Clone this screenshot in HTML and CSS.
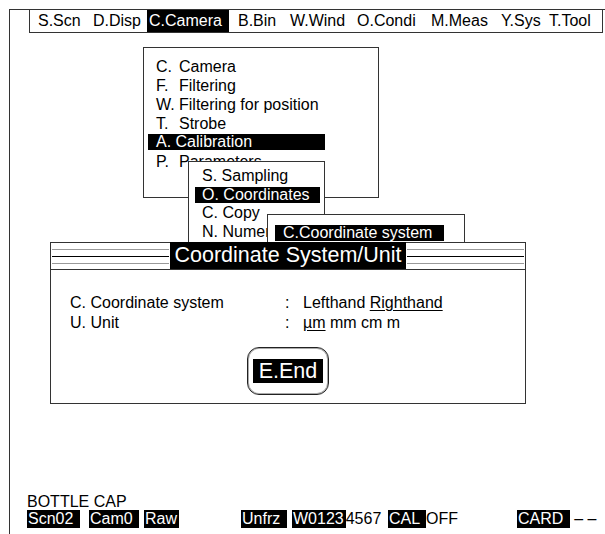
FILE: index.html
```html
<!DOCTYPE html>
<html lang="en">
<head>
    <meta charset="UTF-8">
    <title>Coordinate System/Unit</title>
    <link rel="stylesheet" href="styles.css">
</head>
<body>

    <div class="screen">
        <div class="frame">
            <nav class="menubar">
                <span>S.Scn</span>
                <span>D.Disp</span>
                <span class="on">C.Camera</span>
                <span>B.Bin</span>
                <span>W.Wind</span>
                <span>O.Condi</span>
                <span>M.Meas</span>
                <span>Y.Sys</span>
                <span>T.Tool</span>
            </nav>

            <div class="status">
                <div class="status-name">BOTTLE CAP</div>
                <div class="fields">
                    <div><span class="inv">Scn02 </span></div>
                    <div><span class="inv">Cam0 </span></div>
                    <div><span class="inv">Raw</span></div>
                    <div><span class="inv">Unfrz </span></div>
                    <div><span class="inv">W0123</span>4567</div>
                    <div><span class="inv">CAL </span>OFF</div>
                    <div><span class="inv">CARD </span> &ndash; &ndash;</div>
                </div>
            </div>
        </div>

        <!-- pull-down menus, stacked like windows -->
        <div class="menu menu-main">
            <div class="item"><span class="key">C.</span>Camera</div>
            <div class="item"><span class="key">F.</span>Filtering</div>
            <div class="item"><span class="key">W.</span>Filtering for position</div>
            <div class="item"><span class="key">T.</span>Strobe</div>
            <div class="item on">A. Calibration</div>
            <div class="item"><span class="key">P.</span>Parameters</div>
        </div>

        <div class="menu menu-sub">
            <div class="item">S. Sampling</div>
            <div class="item on">O. Coordinates</div>
            <div class="item">C. Copy</div>
            <div class="item cut">N. Numer</div>
        </div>

        <div class="menu menu-coord">
            <div class="item on">C.Coordinate system</div>
        </div>

        <div class="dialog">
            <div class="dialog-head">
                <div class="rule"></div>
                <div class="dialog-title">Coordinate System/Unit</div>
                <div class="rule"></div>
            </div>
            <div class="dialog-body">
                <div>C. Coordinate system</div>
                <div>:</div>
                <div>Lefthand <u>Righthand</u></div>
                <div>U. Unit</div>
                <div>:</div>
                <div><u>&micro;m</u> mm cm m</div>
            </div>
            <div class="end-wrap">
                <div class="end"><span>E.End</span></div>
            </div>
        </div>
    </div>

</body>
</html>
```

FILE: styles.css
```css
:root {
    --line: #333;
    --line-light: #999;
    --ink: #000;
    --paper: #fff;
}

*, *::before, *::after {
    box-sizing: border-box;
    margin: 0;
    padding: 0;
}

body {
    font-family: "Liberation Sans", Arial, sans-serif;
    font-size: 16px;
    color: var(--ink);
    background: var(--paper);
}

.screen {
    position: relative;
    width: 605px;
    height: 534px;
    overflow: hidden;
}

.frame {
    margin: 9px 0 0 9px;
    height: 525px;
    border-top: 1px solid var(--line);
    border-left: 1px solid var(--line);
    display: flex;
    flex-direction: column;
}

/* top menu bar */
.menubar {
    margin: -1px 0 0 19px;
    width: 574px;
    height: 24px;
    border: 1px solid var(--line);
    padding-left: 6px;
    display: grid;
    grid-template-columns: 55px 56px 89px 52px 67px 74px 70px 48px 1fr;
    line-height: 22px;
}

.menubar span {
    padding-left: 2px;
    white-space: nowrap;
}

.menubar .on {
    justify-self: start;
    width: 82px;
    background: var(--ink);
    color: var(--paper);
}

/* status lines at the bottom */
.status {
    margin-top: auto;
    padding: 0 0 6px 17px;
}

.status-name {
    line-height: 16px;
}

.fields {
    display: grid;
    grid-template-columns: 62px 55px 97px 51px 96px 129px 1fr;
    line-height: 18px;
    white-space: pre;
}

.fields .inv {
    display: inline-block;
    background: var(--ink);
    color: var(--paper);
    padding: 0 2px 0 1px;
}

/* menus */
.menu {
    position: absolute;
    background: var(--paper);
    border: 1px solid var(--line);
    overflow: hidden;
    white-space: nowrap;
}

.menu .item {
    height: 19px;
    line-height: 19px;
}

.menu .item.on {
    height: 16px;
    line-height: 16px;
    margin: 1px 0 2px;
    background: var(--ink);
    color: var(--paper);
}

.menu-main {
    left: 143px;
    top: 47px;
    width: 236px;
    height: 151px;
    padding: 9px 0 0 4px;
}

.menu-main .item {
    padding-left: 8px;
}

.menu-main .item.on {
    width: 177px;
}

.menu-main .key {
    display: inline-block;
    width: 23px;
}

.menu-sub {
    left: 188px;
    top: 161px;
    width: 137px;
    height: 100px;
    padding: 5px 0 0 6px;
}

.menu-sub .item {
    height: 18.5px;
    line-height: 18.5px;
    padding-left: 7px;
}

.menu-sub .item.on {
    width: 125px;
    margin: 1px 0 1.5px;
}

/* the last entry runs in under the next menu */
.menu-sub .item.cut {
    width: 72px;
    overflow: hidden;
}

.menu-coord {
    left: 267px;
    top: 214px;
    width: 198px;
    height: 60px;
    padding: 9px 0 0 7px;
}

.menu-coord .item.on {
    width: 169px;
    padding-left: 8px;
}

/* dialog */
.dialog {
    position: absolute;
    left: 50px;
    top: 242px;
    width: 476px;
    height: 162px;
    background: var(--paper);
    border: 1px solid var(--line);
}

.dialog-head {
    display: flex;
    height: 27px;
    border-bottom: 1px solid var(--line);
}

.dialog-head .rule {
    flex: 1;
    margin: 0 1px;
    background:
        linear-gradient(var(--line-light), var(--line-light)) 0 6px / 100% 1px no-repeat,
        linear-gradient(var(--ink), var(--ink)) 0 13px / 100% 1px no-repeat,
        linear-gradient(var(--line-light), var(--line-light)) 0 20px / 100% 1px no-repeat;
}

.dialog-title {
    margin-top: -1px;
    height: 27px;
    padding: 0 4.5px;
    background: var(--ink);
    color: var(--paper);
    font-size: 21.5px;
    line-height: 27px;
    white-space: nowrap;
}

.dialog-body {
    display: grid;
    grid-template-columns: 215px 18px auto;
    padding: 23px 0 0 19px;
    line-height: 20px;
}

.dialog-body u {
    text-underline-offset: 2px;
}

.end-wrap {
    display: flex;
    justify-content: center;
    margin-top: 14px;
}

.end {
    padding: 11px 5px;
    border: 1px solid #222;
    border-radius: 12px;
    box-shadow: inset 0 0 0 1px #aaa;
}

.end span {
    display: block;
    padding: 0 6px;
    background: var(--ink);
    color: var(--paper);
    font-size: 21.5px;
    line-height: 24px;
}
```
